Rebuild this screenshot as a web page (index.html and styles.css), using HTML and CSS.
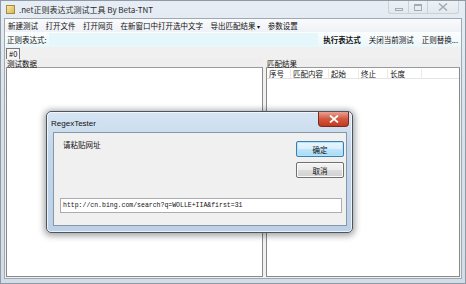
FILE: index.html
```html
<!DOCTYPE html>
<html>
<head>
<meta charset="utf-8">
<link rel="stylesheet" href="styles.css">
</head>
<body>
<div class="window">
  <div class="titlebar">
    <div class="app-icon"></div>
    <div class="title">.net正则表达式测试工具 By Beta-TNT</div>
    <div class="controls">
      <div class="ctl ctl-min"><span></span></div>
      <div class="ctl ctl-max"><span></span></div>
      <div class="ctl ctl-close">
        <svg width="10" height="8" viewBox="0 0 10 8"><path d="M1 0.5 L9 7.5 M9 0.5 L1 7.5" stroke="#a3acb5" stroke-width="1.5" fill="none"/></svg>
      </div>
    </div>
  </div>
  <div class="client">
    <div class="menubar">
      <span class="mi">新建测试</span>
      <span class="mi">打开文件</span>
      <span class="mi">打开网页</span>
      <span class="mi">在新窗口中打开选中文字</span>
      <span class="mi">导出匹配结果 <span class="arrow">▾</span></span>
      <span class="mi">参数设置</span>
    </div>
    <div class="toolbar">
      <span class="lbl">正则表达式:</span>
      <div class="regex-input"></div>
      <span class="tb bold">执行表达式</span>
      <span class="tb">关闭当前测试</span>
      <span class="tb">正则替换...</span>
    </div>
    <div class="tabs"><span class="tab">#0</span></div>
    <div class="panes">
      <div class="pane pane-left">
        <div class="pane-head">测试数据</div>
        <div class="pane-body"></div>
      </div>
      <div class="splitter"></div>
      <div class="pane pane-right">
        <div class="pane-head">匹配结果</div>
        <div class="pane-body list">
          <div class="list-head">
            <span class="col c1">序号</span>
            <span class="col c2">匹配内容</span>
            <span class="col c3">起始</span>
            <span class="col c4">终止</span>
            <span class="col c5">长度</span>
          </div>
        </div>
      </div>
    </div>
  </div>

  <div class="dialog">
    <div class="dlg-title">
      <span class="dlg-name">RegexTester</span>
      <div class="dlg-close">
        <svg width="10" height="8" viewBox="0 0 10 8"><path d="M1 0.5 L9 7.5 M9 0.5 L1 7.5" stroke="#fff" stroke-width="1.8" fill="none"/></svg>
      </div>
    </div>
    <div class="dlg-client">
      <div class="dlg-top">
        <span class="prompt">请粘贴网址</span>
        <div class="dlg-buttons">
          <div class="btn btn-default">确定</div>
          <div class="btn">取消</div>
        </div>
      </div>
      <div class="url-box">http://cn.bing.com/search?q=WOLLE+IIA&amp;first=31</div>
    </div>
  </div>
</div>
</body>
</html>
```

FILE: styles.css
```css
* { box-sizing: border-box; }
html, body { margin: 0; padding: 0; }
body {
  width: 466px;
  height: 284px;
  overflow: hidden;
  font-family: "Noto Sans CJK SC", "Liberation Sans", sans-serif;
  font-size: 7.5px;
  color: #111;
}
.window {
  position: relative;
  width: 466px;
  height: 284px;
  display: flex;
  flex-direction: column;
  background: linear-gradient(#e6edf4, #d8e2ec 40%, #d3dde8);
  border: 1px solid #8f9aa6;
}
.titlebar {
  height: 17px;
  display: flex;
  align-items: center;
  padding-left: 5px;
}
.app-icon {
  width: 9px;
  height: 9px;
  background: linear-gradient(135deg, #f6e7a8, #d9b75a);
  border: 1px solid #a88b3c;
  margin-right: 4px;
}
.title {
  font-size: 8px;
  color: #2a2a2a;
  line-height: 10px;
}
.controls {
  margin-left: auto;
  align-self: flex-start;
  display: flex;
  margin-right: 6px;
}
.ctl {
  height: 13px;
  display: flex;
  align-items: center;
  justify-content: center;
  border: 1px solid #c9d2db;
  border-top: none;
  background: linear-gradient(#eef2f6, #e3e9ef);
}
.ctl-min { width: 20px; border-radius: 0 0 0 3px; border-right: none; }
.ctl-max { width: 19px; border-right: none; }
.ctl-close { width: 32px; border-radius: 0 0 3px 0; }
.ctl-min span { display: block; width: 8px; height: 3px; border: 1px solid #a3acb5; margin-top: 4px; }
.ctl-max span { display: block; width: 8px; height: 7px; border: 1px solid #a3acb5; border-top-width: 2px; }
.client {
  flex: 1;
  margin: 0 3px 4px 3px;
  background: #f0f0f0;
  border: 1px solid #a0a8b2;
  display: flex;
  flex-direction: column;
}
.menubar {
  height: 13px;
  display: flex;
  align-items: center;
  padding-left: 0;
  background: linear-gradient(#fafbfd, #eef1f6);
}
.mi { padding: 0 3px; margin-right: 1.5px; line-height: 11px; white-space: nowrap; }
.arrow { font-size: 6px; }
.toolbar {
  height: 15px;
  display: flex;
  align-items: center;
  padding-left: 2px;
  background: linear-gradient(#fbfdfe, #eaf7fa);
}
.lbl { margin-right: 2px; white-space: nowrap; }
.regex-input {
  flex: 1;
  height: 13px;
  background: #e6f7fb;
}
.tb { padding: 0 3px; margin-left: 2px; white-space: nowrap; }
.bold { font-weight: bold; margin-left: 2px; }
.tabs {
  height: 12px;
  display: flex;
  align-items: flex-end;
  padding-left: 1px;
}
.tab {
  height: 11px;
  padding: 0 2px;
  line-height: 9px;
  border: 1px solid #777;
  border-bottom: none;
  background: #f6f6f6;
}
.panes {
  flex: 1;
  display: flex;
  padding: 0 1px 1px 1px;
}
.pane { display: flex; flex-direction: column; }
.pane-left { width: 257px; }
.splitter { width: 3px; }
.pane-right { flex: 1; }
.pane-head {
  height: 9px;
  line-height: 9px;
  padding-left: 1px;
  background: #eeeeee;
  border-bottom: 1px solid #9a9a9a;
}
.pane-body {
  flex: 1;
  background: #fff;
  border: 1px solid #8a8a8a;
  border-top: none;
}
.list-head {
  height: 11px;
  display: flex;
  align-items: center;
  border-bottom: 1px solid #e4e4e4;
}
.col { padding-left: 2px; border-right: 1px solid #eaeaea; line-height: 9px; }
.c1 { width: 24px; }
.c2 { width: 38px; }
.c3 { width: 30px; }
.c4 { width: 29px; }
.c5 { width: 34px; }

.dialog {
  position: absolute;
  left: 45px;
  top: 110px;
  width: 307px;
  height: 122px;
  border-radius: 5px;
  border: 1px solid #4a5561;
  background: linear-gradient(#d6e5f3, #c3d7eb 30%, #bcd1e7);
  box-shadow: 0 1px 6px 2px rgba(0,0,0,0.35), inset 0 0 0 1px rgba(255,255,255,0.7);
  display: flex;
  flex-direction: column;
  padding: 0 5px 6px 6px;
}
.dlg-title {
  height: 20px;
  display: flex;
  align-items: center;
  position: relative;
}
.dlg-name {
  font-family: "Liberation Sans", sans-serif;
  font-size: 8px;
  color: #111;
  margin-left: -2px;
  margin-top: 3px;
}
.dlg-close {
  position: absolute;
  right: -2px;
  top: 0;
  width: 31px;
  height: 15px;
  border: 1px solid #7a2a20;
  border-top: none;
  border-radius: 0 0 4px 4px;
  background: linear-gradient(#e8a393, #d2573f 50%, #c4391e);
  display: flex;
  align-items: center;
  justify-content: center;
}
.dlg-client {
  flex: 1;
  background: #f0f0f0;
  border: 1px solid #8797a8;
  display: flex;
  flex-direction: column;
  padding: 9px 2px 12px 6px;
}
.dlg-top {
  flex: 1;
  display: flex;
  justify-content: space-between;
}
.prompt { margin-left: 3px; line-height: 9px; margin-top: -2px; }
.dlg-buttons { display: flex; flex-direction: column; gap: 5px; margin-top: -1px; }
.btn {
  width: 48px;
  height: 16px;
  border: 1px solid #707070;
  border-radius: 2px;
  background: linear-gradient(#f3f3f3, #ebebeb 50%, #dcdcdc 51%, #d0d0d0);
  display: flex;
  align-items: center;
  justify-content: center;
  box-shadow: inset 0 0 0 1px #fafafa;
}
.btn-default {
  border-color: #3c7fb1;
  box-shadow: inset 0 0 0 1px #b5e3f8;
  background: linear-gradient(#eaf6fd, #d9f0fc 50%, #bee6fd 51%, #a7d9f5);
}
.url-box {
  height: 15px;
  margin-right: 2px;
  background: #fff;
  border: 1px solid #abadb3;
  font-family: "Liberation Mono", monospace;
  font-size: 6.5px;
  line-height: 13px;
  padding-left: 2px;
  white-space: nowrap;
}
```
